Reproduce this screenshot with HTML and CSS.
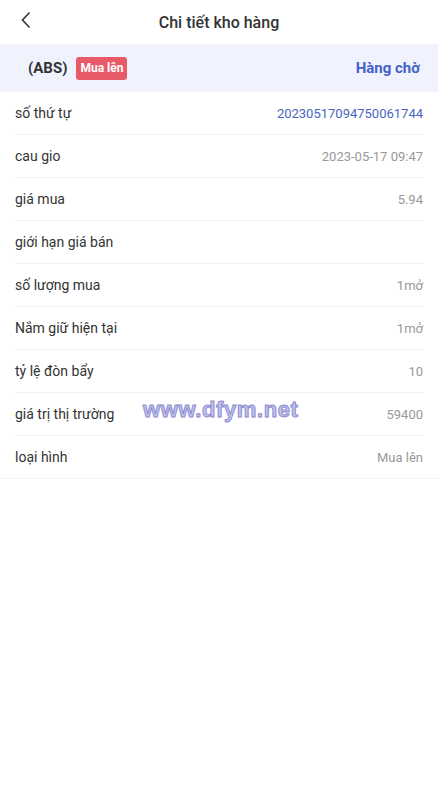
FILE: index.html
```html
<!DOCTYPE html>
<html lang="vi">
<head>
  <meta charset="UTF-8">
  <meta name="viewport" content="width=device-width, initial-scale=1.0">
  <title>Chi tiết kho hàng</title>
  <link rel="stylesheet" href="styles.css">
</head>
<body>
  <div class="page">
    <div class="nav-bar">
      <span class="back">
        <svg width="12" height="18" viewBox="0 0 12 18"><path d="M9.5 1.5 L2.5 9 L9.5 16.5" fill="none" stroke="#333" stroke-width="1.6"/></svg>
      </span>
      <span class="nav-title">Chi tiết kho hàng</span>
    </div>

    <div class="summary">
      <div class="stock">
        <span class="code">(ABS)</span>
        <span class="tag">Mua lên</span>
      </div>
      <span class="status">Hàng chờ</span>
    </div>

    <div class="detail-list">
      <div class="row"><span class="label">số thứ tự</span><span class="value blue">20230517094750061744</span></div>
      <div class="row"><span class="label">cau gio</span><span class="value">2023-05-17 09:47</span></div>
      <div class="row"><span class="label">giá mua</span><span class="value">5.94</span></div>
      <div class="row"><span class="label">giới hạn giá bán</span><span class="value"></span></div>
      <div class="row"><span class="label">số lượng mua</span><span class="value">1mở</span></div>
      <div class="row"><span class="label">Nắm giữ hiện tại</span><span class="value">1mở</span></div>
      <div class="row"><span class="label">tỷ lệ đòn bẩy</span><span class="value">10</span></div>
      <div class="row"><span class="label">giá trị thị trường</span><span class="value">59400</span></div>
      <div class="row"><span class="label">loại hình</span><span class="value">Mua lên</span></div>
    </div>

    <div class="watermark">www.dfym.net</div>
  </div>
</body>
</html>
```

FILE: styles.css
```css
body {
  margin: 0;
  padding: 0;
  background-color: #fff;
  font-family: Roboto, 'Noto Sans', sans-serif;
  color: #333;
}

.page {
  position: relative;
  width: 438px;
  min-height: 802px;
}

.nav-bar {
  height: 44px;
  display: flex;
  align-items: center;
  justify-content: center;
  position: relative;
}

.back {
  position: absolute;
  left: 20px;
  top: 11px;
}

.nav-title {
  font-size: 16px;
  font-weight: 500;
  color: #333;
}

.summary {
  height: 48px;
  background-color: #f0f2fd;
  display: flex;
  align-items: center;
  justify-content: space-between;
  padding: 0 18px 0 28px;
}

.stock {
  display: flex;
  align-items: center;
  gap: 9px;
}

.code {
  font-size: 15px;
  font-weight: 700;
  color: #333;
}

.tag {
  background-color: #e95a68;
  color: #fff;
  font-size: 12px;
  font-weight: 700;
  padding: 3px 4px;
  border-radius: 3px;
  line-height: 17px;
}

.status {
  font-size: 15px;
  font-weight: 700;
  color: #4562c8;
}

.detail-list {
  border-bottom: 1px solid #f3f3f3;
}

.row {
  height: 42px;
  margin: 0 15px;
  display: flex;
  align-items: center;
  justify-content: space-between;
  border-bottom: 1px solid #f0f0f0;
}

.row:last-child {
  border-bottom: none;
}

.label {
  font-size: 14px;
  color: #333;
}

.value {
  font-size: 13px;
  color: #999;
}

.value.blue {
  color: #4866bf;
}

.watermark {
  position: absolute;
  left: 143px;
  top: 397px;
  font-family: 'Liberation Sans', Arial, sans-serif;
  font-size: 22px;
  font-weight: 700;
  color: #c2c2ee;
  -webkit-text-stroke: 1px #8c8cd2;
  letter-spacing: 0.6px;
}
```
